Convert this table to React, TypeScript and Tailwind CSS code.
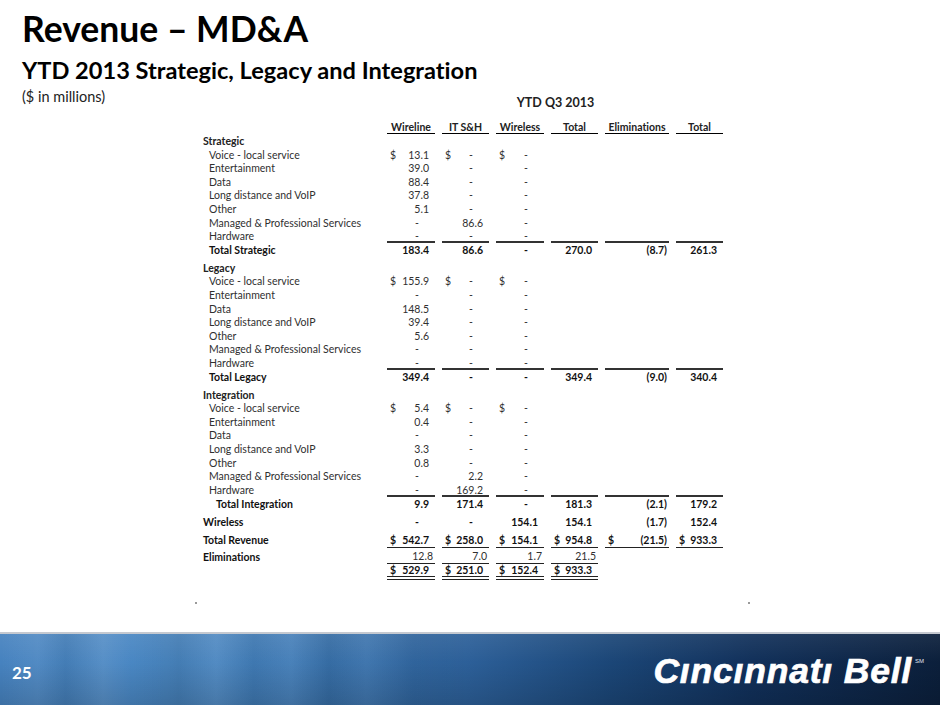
const GRID = "grid grid-cols-[180px_48px_47px_48px_47px_64px_47px] gap-x-[7px]";

type Row = { label: string; cells: string[] };
type Section = { title: string; items: Row[]; total: Row; totalIndent?: boolean };

const sections: Section[] = [
  {
    title: "Strategic",
    items: [
      { label: "Voice - local service", cells: ["$13.1", "$-", "$-"] },
      { label: "Entertainment", cells: ["39.0", "-", "-"] },
      { label: "Data", cells: ["88.4", "-", "-"] },
      { label: "Long distance and VoIP", cells: ["37.8", "-", "-"] },
      { label: "Other", cells: ["5.1", "-", "-"] },
      { label: "Managed & Professional Services", cells: ["-", "86.6", "-"] },
      { label: "Hardware", cells: ["-", "-", "-"] },
    ],
    total: { label: "Total Strategic", cells: ["183.4", "86.6", "-", "270.0", "(8.7)", "261.3"] },
  },
  {
    title: "Legacy",
    items: [
      { label: "Voice - local service", cells: ["$155.9", "$-", "$-"] },
      { label: "Entertainment", cells: ["-", "-", "-"] },
      { label: "Data", cells: ["148.5", "-", "-"] },
      { label: "Long distance and VoIP", cells: ["39.4", "-", "-"] },
      { label: "Other", cells: ["5.6", "-", "-"] },
      { label: "Managed & Professional Services", cells: ["-", "-", "-"] },
      { label: "Hardware", cells: ["-", "-", "-"] },
    ],
    total: { label: "Total Legacy", cells: ["349.4", "-", "-", "349.4", "(9.0)", "340.4"] },
  },
  {
    title: "Integration",
    items: [
      { label: "Voice - local service", cells: ["$5.4", "$-", "$-"] },
      { label: "Entertainment", cells: ["0.4", "-", "-"] },
      { label: "Data", cells: ["-", "-", "-"] },
      { label: "Long distance and VoIP", cells: ["3.3", "-", "-"] },
      { label: "Other", cells: ["0.8", "-", "-"] },
      { label: "Managed & Professional Services", cells: ["-", "2.2", "-"] },
      { label: "Hardware", cells: ["-", "169.2", "-"] },
    ],
    total: { label: "Total Integration", cells: ["9.9", "171.4", "-", "181.3", "(2.1)", "179.2"] },
    totalIndent: true,
  },
];

const headers = ["Wireline", "IT S&H", "Wireless", "Total", "Eliminations", "Total"];

// one accounting-style cell: "$" pinned left, value pinned right
function Num({ v, tight }: { v: string; tight?: boolean }) {
  const dollar = v.startsWith("$");
  const val = dollar ? v.slice(1) : v;
  const pad =
    val === "-" ? "pr-[16px]" : val.endsWith(")") ? "pr-[2px]" : tight ? "pr-[2px]" : "pr-[6px]";
  return (
    <div className="flex justify-between">
      <span className="pl-[3px]">{dollar ? "$" : ""}</span>
      <span className={pad}>{val}</span>
    </div>
  );
}

function ItemRow({ row }: { row: Row }) {
  return (
    <div className={`${GRID} h-[13.6px] items-center text-[#303030]`}>
      <div className="pl-[9px] whitespace-nowrap">{row.label}</div>
      {row.cells.map((c, i) => (
        <Num key={i} v={c} />
      ))}
    </div>
  );
}

export default function App() {
  return (
    <div className="w-[940px] h-[705px] bg-white flex flex-col overflow-hidden font-['Lato','Liberation_Sans',sans-serif] [font-variant-ligatures:no-common-ligatures]">
      {/* Heading */}
      <div className="pl-[22px] pt-[8px]">
        <h1 className="text-[35.5px] leading-[42px] font-bold text-black">Revenue – MD&amp;A</h1>
        <h2 className="mt-[6px] text-[23.6px] leading-[28px] font-bold text-black">
          YTD 2013 Strategic, Legacy and Integration
        </h2>
      </div>
      <div className="flex mt-[3px]">
        <div className="w-[387px] pl-[22px] text-[14.5px] leading-[20px] text-[#222]">($ in millions)</div>
        <div className="w-[337px] pt-[8px] text-center text-[12.5px] leading-[15px] font-bold text-[#222]">
          YTD Q3 2013
        </div>
      </div>

      {/* Table */}
      <div className="ml-[200px] mt-[12px] text-[10.5px]">
        <div className={`${GRID} font-bold text-[#222]`}>
          <div />
          {headers.map((h, i) => (
            <div key={i} className="text-center leading-[11px] border-b-[1.5px] border-black">
              {h}
            </div>
          ))}
        </div>

        {sections.map((s) => (
          <div key={s.title} className="mb-[6px]">
            <div className={`${GRID} h-[13.6px] items-center font-bold text-[#222]`}>
              <div className="pl-[3px]">{s.title}</div>
            </div>
            {s.items.map((r, i) => (
              <ItemRow key={i} row={r} />
            ))}
            <div className={`${GRID} h-[13.6px] -mt-[1.5px] font-bold text-[#111]`}>
              <div className={`${s.totalIndent ? "pl-[16px]" : "pl-[9px]"} pt-[2px] flex items-center`}>
                {s.total.label}
              </div>
              {s.total.cells.map((c, i) => (
                <div key={i} className="border-t-2 border-[#333] flex flex-col justify-center">
                  <Num v={c} />
                </div>
              ))}
            </div>
          </div>
        ))}

        <div className={`${GRID} h-[13.6px] mt-[0.4px] items-center font-bold text-[#111]`}>
          <div className="pl-[3px]">Wireless</div>
          {["-", "-", "154.1", "154.1", "(1.7)", "152.4"].map((c, i) => (
            <Num key={i} v={c} />
          ))}
        </div>

        <div className={`${GRID} mt-[6.4px] font-bold text-[#111]`}>
          <div className="pl-[3px] h-[13.6px] flex items-center">Total Revenue</div>
          {["$542.7", "$258.0", "$154.1", "$954.8", "$(21.5)", "$933.3"].map((c, i) => (
            <div key={i} className="h-[13.6px] border-b-[1.5px] border-[#222] flex flex-col justify-center">
              <Num v={c} />
            </div>
          ))}
        </div>

        <div className={`${GRID} mt-[2.7px]`}>
          <div className="pl-[3px] h-[13.6px] flex items-center font-bold text-[#111]">Eliminations</div>
          {["12.8", "7.0", "1.7", "21.5"].map((c, i) => (
            <div
              key={i}
              className="h-[13.6px] border-b-[1.5px] border-[#222] flex flex-col justify-center text-[#303030]"
            >
              <Num v={c} tight />
            </div>
          ))}
        </div>

        <div className={`${GRID} font-bold text-[#111]`}>
          <div />
          {["$529.9", "$251.0", "$152.4", "$933.3"].map((c, i) => (
            <div key={i} className="leading-[12px] border-b-4 border-double border-[#222]">
              <Num v={c} />
            </div>
          ))}
        </div>
      </div>

      <div className="flex mt-[22px] h-[2px]">
        <span className="ml-[195px] w-[2px] h-[2px] bg-[#9a9a9a]" />
        <span className="ml-[551px] w-[2px] h-[2px] bg-[#9a9a9a]" />
      </div>

      {/* Footer band */}
      <div className="mt-auto h-[73px] border-t-2 border-[#c5c9d0] flex items-center justify-between pl-[12px] pr-[16px] bg-[linear-gradient(180deg,rgba(255,255,255,0.07)_0%,rgba(255,255,255,0)_40%,rgba(0,0,0,0.14)_100%),linear-gradient(90deg,rgba(255,255,255,0)_0%,rgba(255,255,255,0.06)_4%,rgba(0,0,0,0.06)_7%,rgba(255,255,255,0.08)_11%,rgba(255,255,255,0)_14%,rgba(0,0,0,0.08)_19%,rgba(255,255,255,0.07)_23%,rgba(0,0,0,0.05)_27%,rgba(255,255,255,0.06)_31%,rgba(0,0,0,0.08)_35%,rgba(255,255,255,0.05)_39%,rgba(0,0,0,0.04)_44%,rgba(255,255,255,0)_50%),linear-gradient(90deg,#4682bf_0%,#4a88c4_18%,#3a75b1_35%,#2c5f98_50%,#1b4677_65%,#11305a_80%,#0b1f3b_100%)]">
        <div className="pt-[6px] text-[17px] font-bold text-white leading-none">25</div>
        <div className="flex items-start pt-[2px]">
          <span className="font-['Liberation_Sans',Arial,sans-serif] font-bold italic text-[35.5px] leading-[36px] tracking-[0.8px] text-white [-webkit-text-stroke:0.7px_white]">
            Cıncınnatı Bell
          </span>
          <span className="font-['Liberation_Sans',Arial,sans-serif] text-[6px] leading-none text-[#e0e6f0] ml-[3px] mt-[5px]">
            SM
          </span>
        </div>
      </div>
    </div>
  );
}
